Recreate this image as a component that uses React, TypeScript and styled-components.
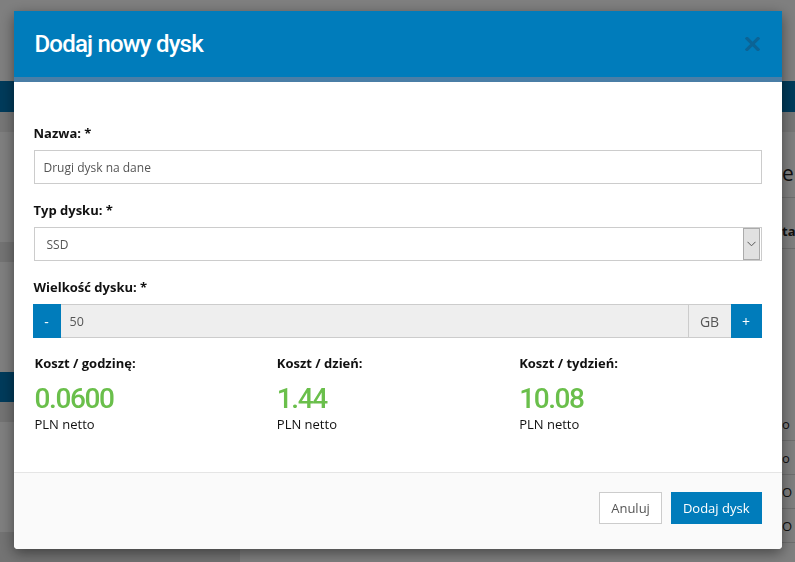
import styled, { createGlobalStyle } from "styled-components";

const GlobalStyle = createGlobalStyle`
  html, body {
    margin: 0;
    padding: 0;
    height: 100%;
    overflow: hidden;
  }

  body {
    font-family: "Open Sans", "Liberation Sans", sans-serif;
    font-size: 13px;
    color: #222;
    background: #fff;
  }

  * {
    box-sizing: border-box;
  }
`;

/* ---------- page behind the dialog ---------- */

const Page = styled.div`
  height: 562px;
  display: flex;
  flex-direction: column;
`;

const TopBar = styled.header`
  height: 82px;
  background: #fff;
`;

const NavBar = styled.nav`
  height: 31px;
  background: #0076b6;
`;

const SubBar = styled.div`
  height: 20px;
  background: #ececec;
`;

const Layout = styled.div`
  flex: 1;
  display: flex;
`;

const Sidebar = styled.aside`
  width: 240px;
  flex-shrink: 0;
  display: flex;
  flex-direction: column;
`;

const SideItem = styled.div<{ $h: number; $tone?: "head" | "active" }>`
  height: ${(p) => p.$h}px;
  flex-shrink: 0;
  background: ${(p) =>
    p.$tone === "active" ? "#0076b6" : p.$tone === "head" ? "#e6e6e6" : "#fff"};
`;

const Main = styled.main`
  flex: 1;
  min-width: 0;
  display: flex;
  padding-left: 542px;
`;

const RightPanel = styled.section`
  flex: 1;
  min-width: 0;
  padding-top: 24px;
  white-space: nowrap;
`;

const PanelTitle = styled.h2`
  margin: 0;
  font-size: 21px;
  font-weight: 400;
  line-height: 34px;
  padding-bottom: 7px;
  border-bottom: 1px solid #ddd;
`;

const PanelRow = styled.div<{ $bold?: boolean }>`
  height: ${(p) => (p.$bold ? 51 : 34)}px;
  display: flex;
  align-items: ${(p) => (p.$bold ? "flex-end" : "center")};
  padding-bottom: ${(p) => (p.$bold ? 8 : 0)}px;
  font-weight: ${(p) => (p.$bold ? 700 : 400)};
  border-bottom: 1px solid #ddd;
`;

const PanelGap = styled.div`
  height: 158px;
`;

/* ---------- dialog ---------- */

const Overlay = styled.div`
  position: fixed;
  inset: 0;
  background: rgba(0, 0, 0, 0.5);
  display: flex;
  justify-content: center;
  padding-top: 11px;
`;

const Dialog = styled.div`
  width: 768px;
  height: 538px;
  background: #fff;
  border-radius: 0 0 4px 4px;
  overflow: hidden;
  box-shadow: 0 4px 14px rgba(0, 0, 0, 0.45);
  display: flex;
  flex-direction: column;
`;

const DialogHeader = styled.div`
  height: 71px;
  background: #007cbb;
  border-bottom: 5px solid #4a7ea6;
  display: flex;
  align-items: center;
  justify-content: space-between;
  padding: 0 22px 0 21px;
`;

const DialogTitle = styled.h1`
  margin: 0;
  color: #fff;
  font-family: "Roboto", "Liberation Sans", sans-serif;
  font-weight: 500;
  font-size: 24px;
  letter-spacing: -0.8px;
`;

const CloseButton = styled.button`
  border: 0;
  padding: 0;
  background: none;
  width: 15px;
  height: 14px;
  display: flex;
  color: #0b6496;
`;

const DialogBody = styled.div`
  flex: 1;
  padding: 42px 20px 0 20px;
`;

const FormGroup = styled.div`
  margin-bottom: 17px;
`;

const Label = styled.label`
  display: block;
  font-weight: 700;
  font-size: 13px;
  line-height: 18px;
  margin-bottom: 8px;
  color: #111;
`;

const TextInput = styled.div`
  height: 34px;
  border: 1px solid #ccc;
  display: flex;
  align-items: center;
  padding: 0 9px;
  color: #555;
  font-size: 12px;
`;

const SelectBox = styled(TextInput)`
  padding: 0 1px 0 12px;
  justify-content: space-between;
`;

const SelectArrow = styled.span`
  width: 17px;
  height: 32px;
  background: #e1e1e1;
  border: 1px solid #ababab;
  display: flex;
  align-items: center;
  justify-content: center;
  color: #555;
`;

const InputGroup = styled.div`
  height: 34px;
  display: flex;
  margin-left: -1px;
`;

const StepButton = styled.button<{ $w: number }>`
  width: ${(p) => p.$w}px;
  border: 0;
  background: #007cbb;
  color: #fff;
  font-family: inherit;
  font-size: 14px;
  padding: 0;
`;

const NumberField = styled.div`
  flex: 1;
  background: #eee;
  border-top: 1px solid #ccc;
  border-bottom: 1px solid #ccc;
  display: flex;
  align-items: center;
  padding: 0 9px;
  color: #555;
  font-size: 12.5px;
`;

const Addon = styled.span`
  width: 43px;
  background: #eee;
  border: 1px solid #ccc;
  border-right: 0;
  display: flex;
  align-items: center;
  justify-content: center;
  color: #555;
  font-size: 14px;
`;

const CostGrid = styled.div`
  display: grid;
  grid-template-columns: repeat(3, 1fr);
  padding-left: 1px;
  margin-top: -1px;
`;

const CostLabel = styled.div`
  font-weight: 700;
  font-size: 13px;
  line-height: 18px;
  color: #111;
`;

const CostValue = styled.div`
  margin-top: 11px;
  font-family: "Roboto", "Liberation Sans", sans-serif;
  font-weight: 500;
  font-size: 28px;
  line-height: 32px;
  letter-spacing: -1.4px;
  color: #6abf4b;
`;

const CostUnit = styled.div`
  font-size: 13px;
  line-height: 18px;
  color: #111;
`;

const DialogFooter = styled.div`
  height: 77px;
  background: #fafafa;
  border-top: 1px solid #e5e5e5;
  display: flex;
  justify-content: flex-end;
  align-items: flex-start;
  gap: 9px;
  padding: 19px 20px 0;
`;

const Button = styled.button<{ $primary?: boolean }>`
  height: 32px;
  padding: 0 11px;
  font-family: inherit;
  font-size: 13px;
  border: 1px solid ${(p) => (p.$primary ? "#007cbb" : "#ccc")};
  background: ${(p) => (p.$primary ? "#007cbb" : "#fff")};
  color: ${(p) => (p.$primary ? "#fff" : "#555")};
`;

const costs = [
  { label: "Koszt / godzinę:", value: "0.0600" },
  { label: "Koszt / dzień:", value: "1.44" },
  { label: "Koszt / tydzień:", value: "10.08" },
];

function BackgroundPage() {
  return (
    <Page>
      <TopBar />
      <NavBar />
      <SubBar />
      <Layout>
        <Sidebar>
          <SideItem $h={110} />
          <SideItem $h={20} $tone="head" />
          <SideItem $h={110} />
          <SideItem $h={30} $tone="active" />
          <SideItem $h={20} $tone="head" />
          <SideItem $h={110} />
          <SideItem $h={30} $tone="head" />
        </Sidebar>
        <Main>
          <RightPanel>
            <PanelTitle>er</PanelTitle>
            <PanelRow $bold>ta</PanelRow>
            <PanelGap />
            <PanelRow>o</PanelRow>
            <PanelRow>o</PanelRow>
            <PanelRow>O</PanelRow>
            <PanelRow>O</PanelRow>
          </RightPanel>
        </Main>
      </Layout>
    </Page>
  );
}

function AddDiskDialog() {
  return (
    <Overlay>
      <Dialog>
        <DialogHeader>
          <DialogTitle>Dodaj nowy dysk</DialogTitle>
          <CloseButton aria-label="Zamknij">
            <svg width="15" height="14" viewBox="0 0 15 14">
              <path
                d="M2 1.5 L13 12.5 M13 1.5 L2 12.5"
                stroke="currentColor"
                strokeWidth="3.2"
                strokeLinecap="square"
              />
            </svg>
          </CloseButton>
        </DialogHeader>

        <DialogBody>
          <FormGroup>
            <Label>Nazwa: *</Label>
            <TextInput>Drugi dysk na dane</TextInput>
          </FormGroup>

          <FormGroup>
            <Label>Typ dysku: *</Label>
            <SelectBox>
              SSD
              <SelectArrow>
                <svg width="9" height="6" viewBox="0 0 9 6">
                  <polyline
                    points="0.5,0.8 4.5,4.8 8.5,0.8"
                    fill="none"
                    stroke="currentColor"
                    strokeWidth="1"
                  />
                </svg>
              </SelectArrow>
            </SelectBox>
          </FormGroup>

          <FormGroup>
            <Label>Wielkość dysku: *</Label>
            <InputGroup>
              <StepButton $w={28}>-</StepButton>
              <NumberField>50</NumberField>
              <Addon>GB</Addon>
              <StepButton $w={31}>+</StepButton>
            </InputGroup>
          </FormGroup>

          <CostGrid>
            {costs.map((c) => (
              <div key={c.label}>
                <CostLabel>{c.label}</CostLabel>
                <CostValue>{c.value}</CostValue>
                <CostUnit>PLN netto</CostUnit>
              </div>
            ))}
          </CostGrid>
        </DialogBody>

        <DialogFooter>
          <Button>Anuluj</Button>
          <Button $primary>Dodaj dysk</Button>
        </DialogFooter>
      </Dialog>
    </Overlay>
  );
}

export default function App() {
  return (
    <>
      <GlobalStyle />
      <BackgroundPage />
      <AddDiskDialog />
    </>
  );
}
